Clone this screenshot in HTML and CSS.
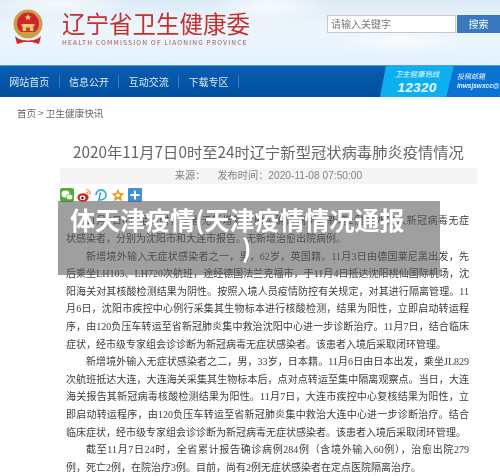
FILE: index.html
```html
<!DOCTYPE html>
<html lang="zh-CN">
<head>
  <meta charset="UTF-8">
  <title>辽宁省卫生健康委</title>
  <link rel="stylesheet" href="styles.css">
</head>
<body>
  <div class="page">
    <div class="header">
      <svg class="emblem" width="30" height="36" viewBox="0 0 30 36">
        <circle cx="15" cy="15" r="14.5" fill="#c9a04a"/>
        <circle cx="15" cy="14.5" r="11" fill="#d2252b"/>
        <path d="M15 5l1 2.4h2.4l-2 1.5.8 2.4-2.2-1.5-2.2 1.5.8-2.4-2-1.5H14z" fill="#f3d676"/>
        <rect x="8.5" y="15" width="13" height="2" fill="#f0d070"/>
        <rect x="9.5" y="17" width="11" height="5" fill="#e8c66a"/>
        <rect x="13" y="18.5" width="4" height="3.5" fill="#b5502a"/>
        <path d="M6 23h18l1 3H5z" fill="#c9a04a"/>
        <path d="M2 27c4 4 9 4.500 13 4.500s9-.5 13-4.500l-2 8-7-2h-8l-7 2z" fill="#d2252b"/>
      </svg>
      <div class="brand">
        <div class="brand-name">辽宁省卫生健康委</div>
        <div class="brand-en">HEALTH COMMISSION OF LIAONING PROVINCE</div>
      </div>
      <div class="search">
        <div class="search-input">请输入关键字</div>
        <div class="search-btn">搜索</div>
      </div>
    </div>

    <div class="nav">
      <a class="nav-item">网站首页</a>
      <a class="nav-item">信息公开</a>
      <a class="nav-item">互动交流</a>
      <a class="nav-item">下载专区</a>
      <div class="hotline">
        <div class="hotline-label">卫生健康热线</div>
        <div class="hotline-num">12320</div>
      </div>
      <div class="mailbox">
        <div class="mailbox-label">投稿邮箱</div>
        <div class="mailbox-addr">lnwsjswxcc@</div>
      </div>
    </div>

    <div class="crumb">首页 &gt; 卫生健康快讯</div>

    <div class="article">
      <h1 class="article-title">2020年11月7日0时至24时辽宁新型冠状病毒肺炎疫情情况</h1>
      <div class="article-info">
        <span>来源：</span>
        <span>发布时间：2020-11-08 07:50:00</span>
      </div>
      <div class="share">
        <svg width="14" height="14" viewBox="0 0 14 14"><rect width="14" height="14" rx="2" fill="#4fb030"/><ellipse cx="5.500" cy="6" rx="4" ry="3.400" fill="#fff"/><ellipse cx="9.500" cy="9" rx="3.300" ry="2.800" fill="#fff" stroke="#4fb030" stroke-width=".7"/></svg>
        <svg width="14" height="14" viewBox="0 0 14 14"><ellipse cx="6" cy="9.500" rx="5.600" ry="4.200" fill="#d8232a"/><ellipse cx="5.600" cy="9.800" rx="2.800" ry="2.300" fill="#fff"/><circle cx="5.400" cy="10" r="1.300" fill="#222"/><path d="M9 1.500a4 4 0 0 1 4 5M9 4a2 2 0 0 1 2 2.400" fill="none" stroke="#f09a1e" stroke-width="1.200"/></svg>
        <svg width="14" height="14" viewBox="0 0 14 14"><path d="M4.500 13.500L6.500 4.500" stroke="#1b9ad6" stroke-width="1.400"/><path d="M2 7a5 5 0 1 1 4 4.800" fill="none" stroke="#28b0e0" stroke-width="1.600"/></svg>
        <svg width="14" height="14" viewBox="0 0 14 14"><path d="M7 .8l1.900 4.200 4.600.5-3.400 3.100 1 4.600L7 10.900l-4.100 2.300 1-4.600L.5 5.500l4.600-.5z" fill="#f09a1e"/><circle cx="7" cy="7.200" r="1.800" fill="#fff"/></svg>
        <svg width="14" height="14" viewBox="0 0 14 14"><rect width="14" height="14" rx="1" fill="#3f8fdc"/><path d="M7 2.500v9M2.500 7h9" stroke="#fff" stroke-width="2"/></svg>
      </div>
      <div class="article-body">
        <span class="ln in">11月7日0时至24时，全省无新增新冠肺炎确诊病例，新增2例境外输入新冠病毒无症</span>
        <span class="ln last">状感染者，分别为沈阳市和大连市报告。无新增治愈出院病例。</span>
        <span class="ln in">新增境外输入无症状感染者之一，男，62岁，英国籍。11月3日由德国莱尼黑出发，先</span>
        <span class="ln">后乘坐LH103、LH720次航班，途经德国法兰克福市，于11月4日抵达沈阳桃仙国际机场，沈</span>
        <span class="ln">阳海关对其核酸检测结果为阴性。按照入境人员疫情防控有关规定，对其进行隔离管理。11</span>
        <span class="ln">月6日，沈阳市疾控中心例行采集其生物标本进行核酸检测，结果为阳性，立即启动转运程</span>
        <span class="ln">序，由120负压车转运至省新冠肺炎集中救治沈阳中心进一步诊断治疗。11月7日，结合临床</span>
        <span class="ln last">症状，经市级专家组会诊诊断为新冠病毒无症状感染者。该患者入境后采取闭环管理。</span>
        <span class="ln in">新增境外输入无症状感染者之二，男，33岁，日本籍。11月6日由日本出发，乘坐JL829</span>
        <span class="ln">次航班抵达大连，大连海关采集其生物标本后，点对点转运至集中隔离观察点。当日，大连</span>
        <span class="ln">海关报告其新冠病毒核酸检测结果为阳性。11月7日，大连市疾控中心复核结果为阳性，立</span>
        <span class="ln">即启动转运程序，由120负压车转运至省新冠肺炎集中救治大连中心进一步诊断治疗。结合</span>
        <span class="ln last">临床症状，经市级专家组会诊诊断为新冠病毒无症状感染者。该患者入境后采取闭环管理。</span>
        <span class="ln in">截至11月7日24时，全省累计报告确诊病例284例（含境外输入60例），治愈出院279</span>
        <span class="ln last">例，死亡2例，在院治疗3例。目前，尚有2例无症状感染者在定点医院隔离治疗。</span>
      </div>
    </div>
  </div>

  <div class="overlay">
    <div class="overlay-title">体天津疫情(天津疫情情况通报</div>
    <div class="overlay-end">)</div>
  </div>
</body>
</html>
```
FILE: styles.css
```css
html, body {
  margin: 0;
  height: 476px;
  overflow: hidden;
}

body {
  position: relative;
  background: #fff;
  font-family: "Noto Sans CJK SC", "Liberation Sans", sans-serif;
  color: #444;
}

.page {
  height: 476px;
  overflow: hidden;
  filter: blur(.35px);
}

.header {
  height: 65px;
  display: flex;
  align-items: flex-start;
  background:
    radial-gradient(ellipse 60px 16px at 270px 6px, rgba(255, 255, 255, .8), transparent),
    radial-gradient(ellipse 70px 14px at 60px 4px, rgba(255, 255, 255, .7), transparent),
    radial-gradient(ellipse 70px 12px at 400px 42px, rgba(255, 255, 255, .7), transparent),
    linear-gradient(180deg, #dcebf6 0%, #eef6fc 45%, #e2f1fd 100%);
}

.emblem {
  margin: 9px 0 0 13px;
}

.brand {
  margin: 9px 0 0 19px;
  width: 200px;
}

.brand-name {
  font-size: 23.5px;
  line-height: 28px;
  color: #c5302f;
  white-space: nowrap;
}

.brand-en {
  font-size: 6.6px;
  line-height: 10px;
  letter-spacing: 1.16px;
  color: #a5504f;
  white-space: nowrap;
}

.search {
  margin: 15px 0 0 auto;
  display: flex;
}

.search-input {
  width: 124px;
  height: 16px;
  padding-left: 3px;
  border: 1px solid #c8c8c8;
  background: #fff;
  font-size: 10px;
  line-height: 16px;
  color: #777;
}

.search-btn {
  width: 43px;
  height: 18px;
  margin-left: 1px;
  background: #3a78c0;
  color: #fff;
  font-size: 10px;
  line-height: 18px;
  text-align: center;
}

.nav {
  height: 32px;
  display: flex;
  align-items: center;
  background: linear-gradient(180deg, #0a5cb2 0%, #00509f 100%);
  border-top: 1px solid #5a9ae0;
  box-sizing: border-box;
  color: #dfeaf6;
}

.nav-item {
  width: 59.7px;
  font-size: 10px;
  line-height: 13px;
  text-align: center;
  border-right: 1px solid #3a7cc4;
  box-sizing: border-box;
}

.hotline {
  margin-left: auto;
  width: 74px;
  height: 31px;
  background: #0cb0f0;
  clip-path: polygon(8% 0, 100% 0, 90% 100%, 0 100%);
  color: #eaf7fe;
  font-style: italic;
  text-align: center;
}

.hotline-label {
  font-size: 7.4px;
  line-height: 12px;
  padding-top: 2px;
}

.hotline-num {
  font-family: "Liberation Sans", sans-serif;
  font-size: 13.5px;
  font-weight: bold;
  line-height: 16px;
  letter-spacing: .4px;
}

.mailbox {
  width: 53px;
  height: 31px;
  margin-left: -7px;
  background: #0a72d2;
  clip-path: polygon(14% 0, 100% 0, 100% 100%, 0 100%);
  color: #e6f2fc;
  font-style: italic;
  padding-left: 10px;
  box-sizing: border-box;
  overflow: hidden;
  white-space: nowrap;
}

.mailbox-label {
  font-size: 7px;
  line-height: 10px;
  padding-top: 5px;
}

.mailbox-addr {
  font-family: "Liberation Sans", sans-serif;
  font-size: 6.5px;
  font-weight: bold;
  line-height: 9px;
}

.crumb {
  padding: 9px 0 0 17px;
  font-size: 9.6px;
  line-height: 14px;
  color: #666;
}

.article {
  width: 417px;
  margin: 20px 0 0 60px;
}

.article-title {
  margin: 0;
  font-size: 15.3px;
  font-weight: normal;
  line-height: 22px;
  color: #666;
  text-align: center;
  white-space: nowrap;
}

.article-info {
  height: 16px;
  margin-top: 6px;
  display: flex;
  justify-content: center;
  gap: 12px;
  background: #f5f5f5;
  font-family: "Liberation Sans", "Noto Sans CJK SC", sans-serif;
  font-size: 10.2px;
  line-height: 16px;
  color: #808080;
}

.share {
  display: flex;
  gap: 3px;
  margin-top: 4px;
  height: 14px;
}

.article-body {
  margin: 10.400px 0 0 6px;
  width: 403px;
  font-family: "Liberation Serif", "Noto Sans CJK SC", serif;
  font-size: 10px;
  color: #3c3c3c;
}

.ln {
  display: block;
  height: 17.600px;
  line-height: 17.600px;
  white-space: nowrap;
  text-align: justify;
  text-align-last: justify;
}

.ln.last {
  text-align-last: left;
}

.ln.in {
  padding-left: 20px;
}

.overlay {
  position: absolute;
  left: 58px;
  top: 201px;
  width: 382px;
  height: 74px;
  box-sizing: border-box;
  padding-left: 12px;
  background: rgba(90, 90, 90, .58);
  color: #fff;
  font-size: 25px;
  font-weight: bold;
  line-height: 28px;
  overflow: hidden;
}

.overlay-title {
  margin-top: 4px;
  white-space: nowrap;
}

.overlay-end {
  padding-left: 172px;
}
```
